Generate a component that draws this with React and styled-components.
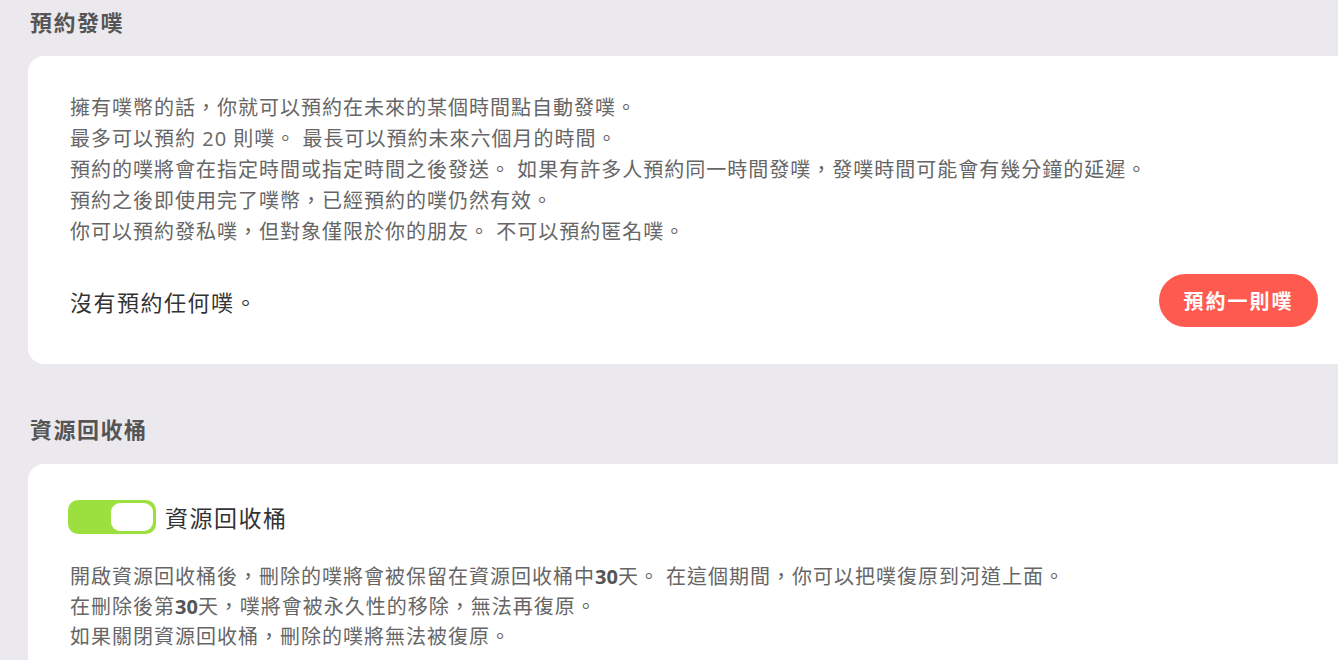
import React from "react";
import styled, { createGlobalStyle } from "styled-components";

const Global = createGlobalStyle`
  html, body { margin: 0; padding: 0; background: #ebe9ee; overflow: hidden; }
  body { font-family: "Open Sans", "Noto Sans CJK TC", sans-serif; }
`;

const Page = styled.div`
  width: 1330px;
  padding: 7px 0 0 28px;
  display: flex;
  flex-direction: column;
`;

const SectionTitle = styled.h2`
  margin: ${(p) => (p.$first ? "0 0 19px" : "50px 0 20px")} 2px;
  margin-left: 2px;
  font-size: 22px;
  line-height: 30px;
  font-weight: 700;
  letter-spacing: 1.5px;
  color: #555;
`;

const Card = styled.div`
  background: #fff;
  border-radius: 16px;
  padding: ${(p) => p.$pad};
  display: flex;
  flex-direction: column;
`;

const Info = styled.div`
  font-size: 20px;
  line-height: ${(p) => p.$lh || "31px"};
  letter-spacing: 1px;
  color: #666;
  padding-left: ${(p) => p.$indent || "0px"};
  & b { font-weight: 700; color: #555; letter-spacing: 0; }
`;

const InfoLine = styled.div`
  white-space: nowrap;
`;

const ActionRow = styled.div`
  margin-top: 27px;
  display: flex;
  align-items: center;
  justify-content: space-between;
`;

const Empty = styled.div`
  font-size: 22px;
  letter-spacing: 1.5px;
  color: #333;
`;

const PrimaryButton = styled.button`
  height: 53px;
  width: 159px;
  border: none;
  border-radius: 27px;
  background: #ff5a4f;
  color: #fff;
  font-family: inherit;
  font-size: 20px;
  font-weight: 700;
  letter-spacing: 2px;
  cursor: pointer;
`;

const ToggleRow = styled.label`
  display: flex;
  align-items: center;
  gap: 9px;
  margin-bottom: 28px;
`;

const Switch = styled.span`
  width: 88px;
  height: 34px;
  box-sizing: border-box;
  border-radius: 10px;
  background: #9be03f;
  padding: 3px;
  display: flex;
  justify-content: ${(p) => (p.$on ? "flex-end" : "flex-start")};
`;

const Knob = styled.span`
  width: 42px;
  height: 28px;
  border-radius: 9px;
  background: #fff;
`;

const ToggleLabel = styled.span`
  font-size: 23px;
  letter-spacing: 1.5px;
  color: #333;
`;

export default function App() {
  return (
    <>
      <Global />
      <Page>
        <SectionTitle $first>預約發噗</SectionTitle>
        <Card $pad="36px 40px 37px 42px">
          <Info>
            <InfoLine>擁有噗幣的話，你就可以預約在未來的某個時間點自動發噗。</InfoLine>
            <InfoLine>最多可以預約 20 則噗。 最長可以預約未來六個月的時間。</InfoLine>
            <InfoLine>預約的噗將會在指定時間或指定時間之後發送。 如果有許多人預約同一時間發噗，發噗時間可能會有幾分鐘的延遲。</InfoLine>
            <InfoLine>預約之後即使用完了噗幣，已經預約的噗仍然有效。</InfoLine>
            <InfoLine>你可以預約發私噗，但對象僅限於你的朋友。 不可以預約匿名噗。</InfoLine>
          </Info>
          <ActionRow>
            <Empty>沒有預約任何噗。</Empty>
            <PrimaryButton>預約一則噗</PrimaryButton>
          </ActionRow>
        </Card>

        <SectionTitle>資源回收桶</SectionTitle>
        <Card $pad="36px 40px 40px 40px">
          <ToggleRow>
            <Switch $on>
              <Knob />
            </Switch>
            <ToggleLabel>資源回收桶</ToggleLabel>
          </ToggleRow>
          <Info $lh="30px" $indent="2px">
            <InfoLine>開啟資源回收桶後，刪除的噗將會被保留在資源回收桶中<b>30</b>天。 在這個期間，你可以把噗復原到河道上面。</InfoLine>
            <InfoLine>在刪除後第<b>30</b>天，噗將會被永久性的移除，無法再復原。</InfoLine>
            <InfoLine>如果關閉資源回收桶，刪除的噗將無法被復原。</InfoLine>
          </Info>
        </Card>
      </Page>
    </>
  );
}
